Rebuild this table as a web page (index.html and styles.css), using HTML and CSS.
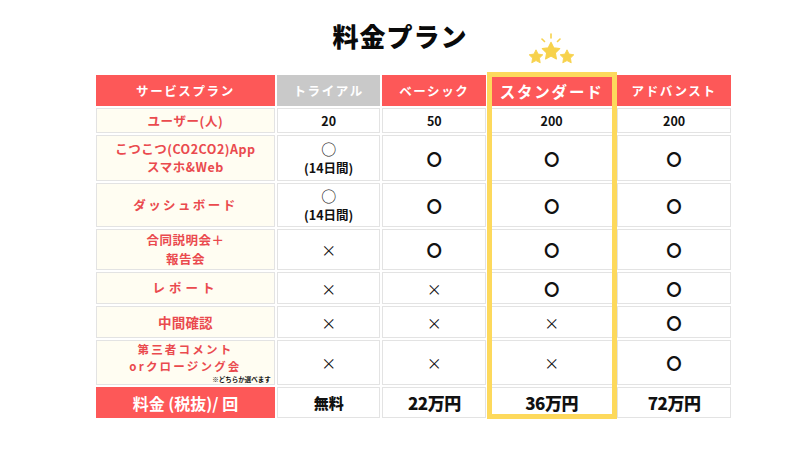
FILE: index.html
```html
<!DOCTYPE html>
<html lang="ja">
<head>
<meta charset="utf-8">
<link rel="stylesheet" href="styles.css">
</head>
<body>
<div class="page">
  <h1 class="title">料金プラン</h1>
  <div class="wrap">
    <svg class="stars" width="60" height="36" viewBox="0 0 60 36" aria-hidden="true">
      <defs>
        <path id="st" d="M0,-10 L2.94,-4.05 L9.51,-3.09 L4.76,1.55 L5.88,8.09 L0,5 L-5.88,8.09 L-4.76,1.55 L-9.51,-3.09 L-2.94,-4.05Z"/>
      </defs>
      <g fill="#f7d24c" stroke="#f7d24c" stroke-width="1.2" stroke-linejoin="round">
        <use href="#st" transform="translate(16 27) scale(0.72)"/>
        <use href="#st" transform="translate(31 21.5) scale(0.92)"/>
        <use href="#st" transform="translate(47 27) scale(0.72)"/>
      </g>
      <g stroke="#f7d24c" stroke-width="1.6" stroke-linecap="round">
        <line x1="31" y1="4" x2="31" y2="8"/>
        <line x1="22" y1="9" x2="24.5" y2="11.5"/>
        <line x1="40" y1="9" x2="37.5" y2="11.5"/>
      </g>
    </svg>
    <table class="plans">
      <colgroup>
        <col class="c-label"><col class="c-trial"><col class="c-basic"><col class="c-std"><col class="c-adv">
      </colgroup>
      <thead>
        <tr class="r-head">
          <th class="h-red">サービスプラン</th>
          <th class="h-gray">トライアル</th>
          <th class="h-red">ベーシック</th>
          <th class="h-red h-std">スタンダード</th>
          <th class="h-red">アドバンスト</th>
        </tr>
      </thead>
      <tbody>
        <tr class="r-users">
          <th class="lbl">ユーザー(人)</th>
          <td class="num">20</td><td class="num">50</td><td class="num">200</td><td class="num">200</td>
        </tr>
        <tr class="r-app">
          <th class="lbl lbl-app lbl-two">こつこつ(CO2CO2)App<br>スマホ&amp;Web</th>
          <td><span class="thin-ok">○</span><br><span class="days">(14日間)</span></td>
          <td><span class="ok">〇</span></td><td><span class="ok">〇</span></td><td><span class="ok">〇</span></td>
        </tr>
        <tr class="r-dash">
          <th class="lbl lbl-wide">ダッシュボード</th>
          <td><span class="thin-ok">○</span><br><span class="days">(14日間)</span></td>
          <td><span class="ok">〇</span></td><td><span class="ok">〇</span></td><td><span class="ok">〇</span></td>
        </tr>
        <tr class="r-joint">
          <th class="lbl lbl-kanji lbl-two">合同説明会＋<br>報告会</th>
          <td><span class="ng">×</span></td>
          <td><span class="ok">〇</span></td><td><span class="ok">〇</span></td><td><span class="ok">〇</span></td>
        </tr>
        <tr class="r-report">
          <th class="lbl lbl-report">レポート</th>
          <td><span class="ng">×</span></td><td><span class="ng">×</span></td>
          <td><span class="ok">〇</span></td><td><span class="ok">〇</span></td>
        </tr>
        <tr class="r-mid">
          <th class="lbl lbl-mid">中間確認</th>
          <td><span class="ng">×</span></td><td><span class="ng">×</span></td><td><span class="ng">×</span></td>
          <td><span class="ok">〇</span></td>
        </tr>
        <tr class="r-third">
          <th class="lbl lbl-third">
            <div class="third-lines">第三者コメント<br>orクロージング会</div>
            <div class="note">※どちらか選べます</div>
          </th>
          <td><span class="ng">×</span></td><td><span class="ng">×</span></td><td><span class="ng">×</span></td>
          <td><span class="ok">〇</span></td>
        </tr>
        <tr class="r-price">
          <th class="price-lbl">料金 (税抜)/ 回</th>
          <td class="price price-free">無料</td>
          <td class="price">22万円</td>
          <td class="price">36万円</td>
          <td class="price">72万円</td>
        </tr>
      </tbody>
    </table>
    <div class="frame"></div>
  </div>
</div>
</body>
</html>
```

FILE: styles.css
```css
html, body {
  margin: 0;
  padding: 0;
  background: #ffffff;
}
body {
  font-family: "Noto Sans CJK JP", "Noto Sans", sans-serif;
  color: #111;
}
.page {
  width: 800px;
  height: 450px;
  overflow: hidden;
}
.title {
  margin: 0;
  padding-top: 22px;
  height: 28px;
  line-height: 28px;
  font-size: 26px;
  font-weight: 900;
  text-align: center;
  letter-spacing: 1px;
  color: #0a0a0a;
}
.wrap {
  position: relative;
  width: 639px;
  margin: 23px 0 0 94px;
}
.stars {
  position: absolute;
  left: 426px;
  top: -43px;
}
.plans {
  table-layout: fixed;
  width: 639px;
  border-collapse: separate;
  border-spacing: 2px;
}
.c-label { width: 176px; }
.c-trial { width: 102px; }
.c-basic { width: 102px; }
.c-std { width: 125px; }
.c-adv { width: 112px; }

.plans th, .plans td {
  padding: 0;
  text-align: center;
  vertical-align: middle;
  border: 1px solid #e3e3e3;
  line-height: 16px;
}
.r-head th {
  height: 29px;
  color: #fff;
  font-size: 12.5px;
  font-weight: 700;
  letter-spacing: 1.6px;
}
.h-red { background: #fd5858; border-color: #fd5858 !important; }
.h-gray { background: #c9c9c9; border-color: #c9c9c9 !important; }
.h-std { font-size: 15.5px !important; letter-spacing: 1.8px !important; }

.lbl {
  background: #fffdf2;
  color: #ea4a4e;
  font-size: 12.5px;
  font-weight: 700;
  letter-spacing: 0.6px;
}
.lbl-two { line-height: 18.2px !important; }
.lbl-app { letter-spacing: 0.5px; }
.lbl-wide { letter-spacing: 2.4px; }
.lbl-report { letter-spacing: 4px; }
.lbl-kanji { font-size: 12.5px; letter-spacing: 0.5px; }
.lbl-mid { font-size: 13.5px; letter-spacing: 0.2px; }
.lbl-third { letter-spacing: 2.2px; }
.third-lines { font-size: 11.5px; line-height: 16.8px; }
.note {
  text-align: right;
  font-size: 6.5px;
  line-height: 9.5px;
  letter-spacing: 0;
  color: #111;
  padding-right: 3px;
}

.r-users th, .r-users td { height: 23px; }
.r-app th, .r-app td { height: 44px; }
.r-dash th, .r-dash td { height: 42px; }
.r-joint th, .r-joint td { height: 39px; }
.r-report th, .r-report td { height: 30px; }
.r-mid th, .r-mid td { height: 30px; }
.r-third th, .r-third td { height: 43px; }
.r-price th, .r-price td { height: 29px; }

.num {
  font-size: 12.5px;
  font-weight: 700;
}
.ok {
  display: inline-block;
  font-size: 15px;
  font-weight: 900;
  line-height: 16px;
}
.thin-ok {
  font-size: 15px;
  font-weight: 400;
  line-height: 18px;
}
.days {
  font-size: 12.5px;
  font-weight: 700;
}
.ng {
  font-size: 15px;
  font-weight: 400;
}
.price-lbl {
  background: #fd5858;
  border-color: #fd5858 !important;
  color: #fff;
  font-size: 16px;
  font-weight: 700;
}
.price {
  font-size: 17px;
  font-weight: 900;
  letter-spacing: -0.5px;
}
.price-free { font-size: 15px; letter-spacing: 0; }

.frame {
  position: absolute;
  left: 393px;
  top: -1px;
  width: 120px;
  height: 337px;
  border: 5px solid #fdd95c;
  pointer-events: none;
}
```
